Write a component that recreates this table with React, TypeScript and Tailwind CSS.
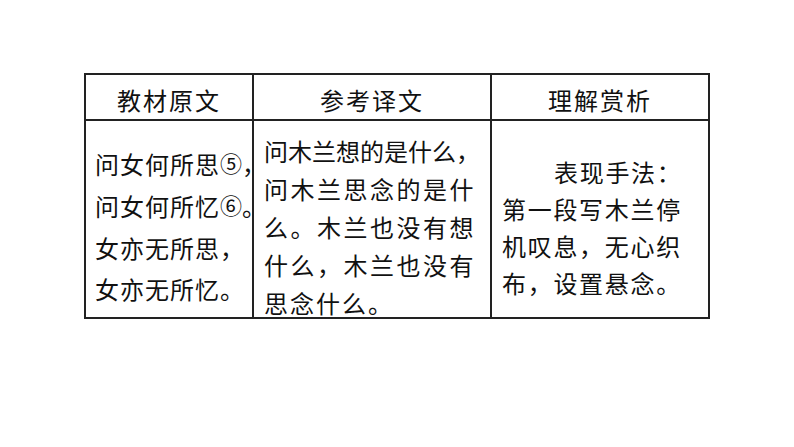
import React from "react";

const font = { fontFamily: '"Noto Sans CJK SC", "Noto Sans", sans-serif' };

export default function App() {
  return (
    <div className="w-[794px] h-[447px] bg-white overflow-hidden text-[#111]" style={font}>
      <div className="ml-[84px] mt-[73px] w-[626px] border-l-2 border-t-2 border-[#222] grid grid-cols-[168px_238px_218px]">
        {/* header */}
        <div className="h-[46px] border-r-2 border-b-2 border-[#222] flex items-center justify-center pt-[5px] text-[24px] leading-none tracking-[2px]">
          教材原文
        </div>
        <div className="h-[46px] border-r-2 border-b-2 border-[#222] flex items-center justify-center pt-[5px] text-[24px] leading-none tracking-[2px]">
          参考译文
        </div>
        <div className="h-[46px] border-r-2 border-b-2 border-[#222] flex items-center justify-center pt-[5px] text-[24px] leading-none tracking-[2px]">
          理解赏析
        </div>

        {/* body */}
        <div className="h-[198px] border-r-2 border-b-2 border-[#222] pl-[9px] pt-[22px] text-[24px] leading-[41px] tracking-[1px] whitespace-nowrap">
          <div>
            问女何所思<span className="text-[22px] tracking-[0px] relative -top-[2px]">⑤</span>，
          </div>
          <div>
            问女何所忆<span className="text-[22px] tracking-[0px] relative -top-[2px]">⑥</span>。
          </div>
          <div>女亦无所思，</div>
          <div>女亦无所忆。</div>
        </div>
        <div className="h-[198px] border-r-2 border-b-2 border-[#222] pl-[10px] pt-[11px] text-[24px] leading-[38px] whitespace-nowrap">
          <div className="tracking-[0px]">问木兰想的是什么，</div>
          <div className="tracking-[2.5px]">问木兰思念的是什</div>
          <div className="tracking-[2.5px]">么。木兰也没有想</div>
          <div className="tracking-[2.5px]">什么，木兰也没有</div>
          <div className="tracking-[2px]">思念什么。</div>
        </div>
        <div className="h-[198px] border-r-2 border-b-2 border-[#222] pl-[10px] pt-[32px] text-[24px] leading-[37px] tracking-[1.7px] whitespace-nowrap">
          <div className="pl-[52px]">表现手法：</div>
          <div>第一段写木兰停</div>
          <div>机叹息，无心织</div>
          <div>布，设置悬念。</div>
        </div>
      </div>
    </div>
  );
}
